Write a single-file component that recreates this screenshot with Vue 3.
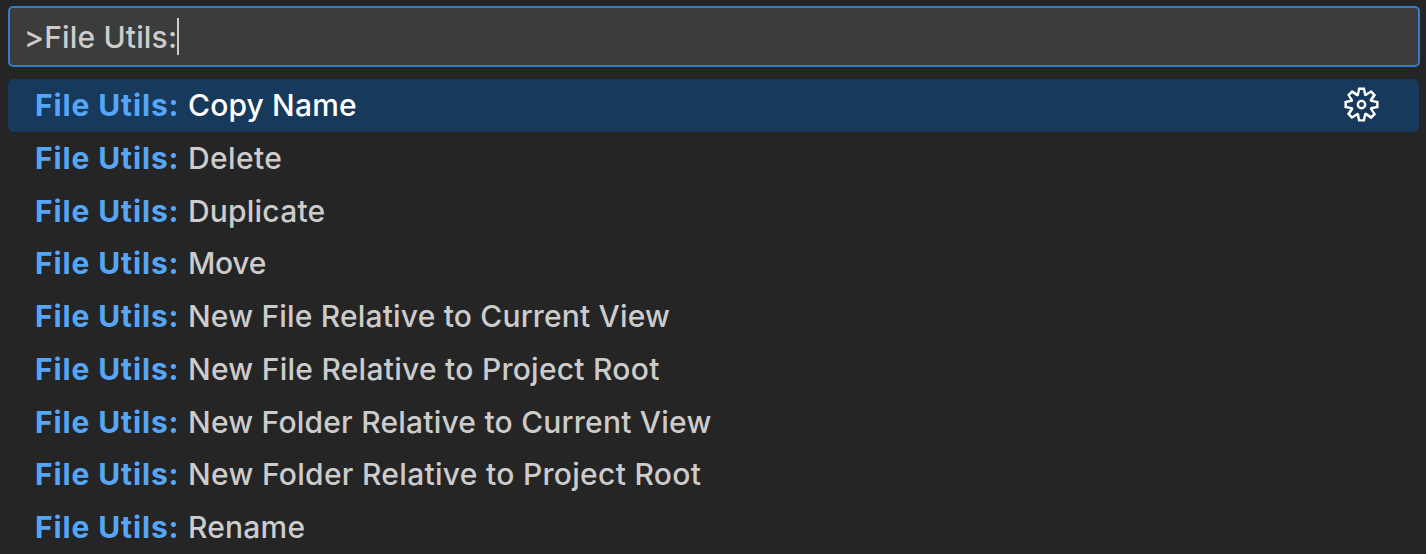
<script setup>
const prefix = 'File Utils:'
const commands = [
  { name: 'Copy Name', tracking: 0.15 },
  { name: 'Delete', tracking: 0.4 },
  { name: 'Duplicate', tracking: 0.2 },
  { name: 'Move', tracking: -0.3 },
  { name: 'New File Relative to Current View', tracking: 0.18 },
  { name: 'New File Relative to Project Root', tracking: 0.26 },
  { name: 'New Folder Relative to Current View', tracking: 0.22 },
  { name: 'New Folder Relative to Project Root', tracking: 0.3 },
  { name: 'Rename', tracking: 0.2 },
]
</script>

<template>
  <main class="palette">
    <div class="input"><span class="query">>File Utils:</span><i class="caret"></i></div>
    <ul class="list">
      <li v-for="(c, i) in commands" :key="c.name" class="row" :class="{ active: i === 0 }">
        <b class="prefix">{{ prefix }}</b>
        <span class="name" :style="{ letterSpacing: c.tracking + 'px' }">{{ c.name }}</span>
        <svg v-if="i === 0" class="gear" viewBox="0 0 16 16" fill="currentColor" fill-rule="evenodd">
          <path d="M9.1 4.4L8.6 2H7.4l-.5 2.4-.7.3-2-1.3-.9.8 1.3 2-.2.7-2.4.5v1.2l2.4.5.3.8-1.3 2 .8.8 2-1.3.8.3.4 2.3h1.2l.5-2.4.8-.3 2 1.3.8-.8-1.3-2 .3-.8 2.3-.4V7.4l-2.4-.5-.3-.8 1.3-2-.8-.8-2 1.3-.7-.2zM9.4 1l.5 2.4L12 2.1l2 2-1.4 2.1 2.4.4v2.8l-2.4.5L14 12l-2 2-2.1-1.4-.5 2.4H6.6l-.5-2.4L4 13.9l-2-2 1.4-2.1L1 9.4V6.6l2.4-.5L2.1 4l2-2 2.1 1.4.4-2.4h2.8zm.6 7c0 1.1-.9 2-2 2s-2-.9-2-2 .9-2 2-2 2 .9 2 2zM8 9c.6 0 1-.4 1-1s-.4-1-1-1-1 .4-1 1 .4 1 1 1z" />
        </svg>
      </li>
    </ul>
  </main>
</template>

<style>
body { background: #252526; }
</style>

<style scoped>
.palette { box-sizing: border-box; width: 1426px; height: 554px; padding: 6px 6px 0 8px; overflow: hidden; background: #252526; color: #ccc; font-family: Inter, sans-serif; font-size: 30px; }
.input { box-sizing: border-box; height: 61px; width: 1412px; display: flex; align-items: center; padding: 0 14px; border: 2px solid #357acb; border-radius: 5px; background: #3c3c3c; }
.query { white-space: pre; font-weight: 450; letter-spacing: 0.16px; }
.caret { width: 2px; height: 37px; background: #ccc; }
.list { list-style: none; margin: 11.75px 0 0; padding: 0; width: 1411px; }
.row { box-sizing: border-box; height: 52.78px; display: flex; align-items: center; padding: 0 38px 0 27px; border-radius: 6px; white-space: nowrap; }
.prefix { width: 153px; flex: none; color: #56a6f8; font-weight: 750; letter-spacing: 0.87px; }
.name { font-weight: 450; }
.active { background: #17395b; color: #fff; }
.gear { width: 39px; height: 39px; margin: 0 0 1px auto; color: #fff; }
</style>
